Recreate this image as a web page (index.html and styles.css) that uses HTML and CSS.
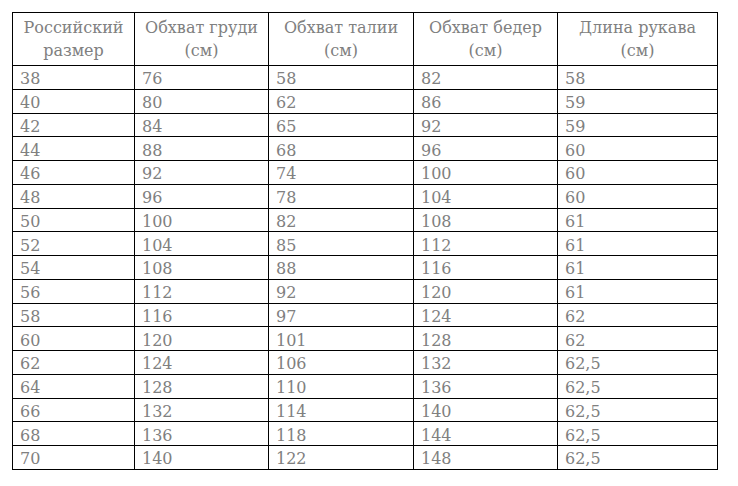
FILE: index.html
```html
<!DOCTYPE html>
<html lang="ru">
<head>
<meta charset="utf-8">
<link rel="stylesheet" href="styles.css">
</head>
<body>
<table class="sizes">
  <colgroup>
    <col class="c1"><col class="c2"><col class="c3"><col class="c4"><col class="c5">
  </colgroup>
  <thead>
    <tr>
      <th>Российский<br>размер</th>
      <th>Обхват груди<br>(см)</th>
      <th>Обхват талии<br>(см)</th>
      <th>Обхват бедер<br>(см)</th>
      <th>Длина рукава<br>(см)</th>
    </tr>
  </thead>
  <tbody>
    <tr><td>38</td><td>76</td><td>58</td><td>82</td><td>58</td></tr>
    <tr><td>40</td><td>80</td><td>62</td><td>86</td><td>59</td></tr>
    <tr><td>42</td><td>84</td><td>65</td><td>92</td><td>59</td></tr>
    <tr><td>44</td><td>88</td><td>68</td><td>96</td><td>60</td></tr>
    <tr><td>46</td><td>92</td><td>74</td><td>100</td><td>60</td></tr>
    <tr><td>48</td><td>96</td><td>78</td><td>104</td><td>60</td></tr>
    <tr><td>50</td><td>100</td><td>82</td><td>108</td><td>61</td></tr>
    <tr><td>52</td><td>104</td><td>85</td><td>112</td><td>61</td></tr>
    <tr><td>54</td><td>108</td><td>88</td><td>116</td><td>61</td></tr>
    <tr><td>56</td><td>112</td><td>92</td><td>120</td><td>61</td></tr>
    <tr><td>58</td><td>116</td><td>97</td><td>124</td><td>62</td></tr>
    <tr><td>60</td><td>120</td><td>101</td><td>128</td><td>62</td></tr>
    <tr><td>62</td><td>124</td><td>106</td><td>132</td><td>62,5</td></tr>
    <tr><td>64</td><td>128</td><td>110</td><td>136</td><td>62,5</td></tr>
    <tr><td>66</td><td>132</td><td>114</td><td>140</td><td>62,5</td></tr>
    <tr><td>68</td><td>136</td><td>118</td><td>144</td><td>62,5</td></tr>
    <tr><td>70</td><td>140</td><td>122</td><td>148</td><td>62,5</td></tr>
  </tbody>
</table>
</body>
</html>
```
FILE: styles.css
```css
html, body {
  margin: 0;
  background: #fff;
}
body {
  padding: 12px 0 0 12px;
  font-family: "DejaVu Serif", "Liberation Serif", serif;
  color: #808080;
}
.sizes {
  border-collapse: collapse;
  table-layout: fixed;
  width: 705px;
  font-size: 16px;
}
.c1 { width: 122px; }
.c2 { width: 134px; }
.c3 { width: 145px; }
.c4 { width: 144px; }
.c5 { width: 160px; }
.sizes th,
.sizes td {
  border: 1px solid #000;
  font-weight: normal;
  text-align: left;
}
.sizes td {
  box-sizing: border-box;
  height: 23.76px;
  padding: 4px 7px 0 7px;
  line-height: 18px;
  vertical-align: middle;
}
.sizes th {
  text-align: center;
  height: 52px;
  line-height: 23px;
  padding: 0 4px;
  vertical-align: middle;
}
```
